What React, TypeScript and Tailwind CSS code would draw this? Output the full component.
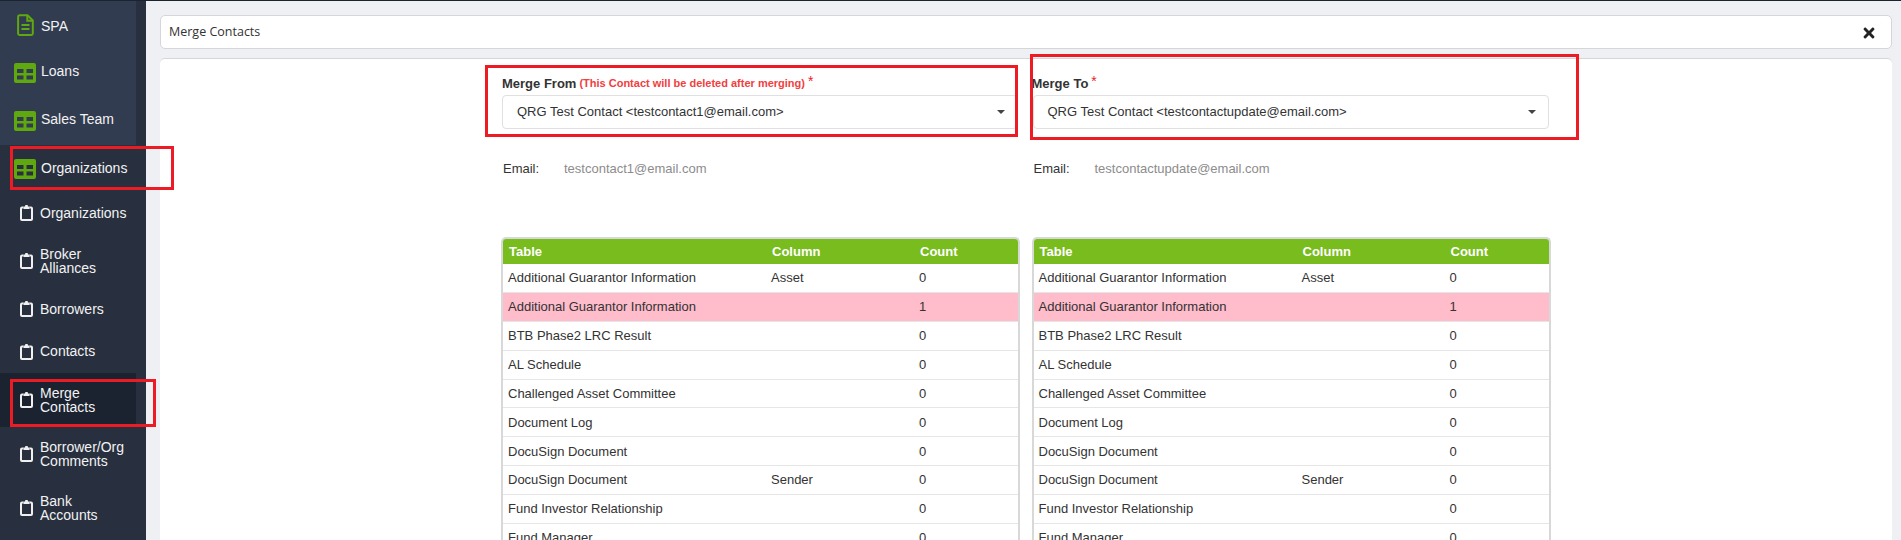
import { FaTimes } from 'react-icons/fa';

const FileIcon = () => (
  <svg width="17" height="22" viewBox="0 0 17 22" fill="none" className="text-[#5fa80f]">
    <path d="M2.500 1.200h8l5.300 5.300v13c0 .8-.7 1.400-1.500 1.400H2.500c-.8 0-1.400-.6-1.400-1.400V2.700c0-.8.6-1.500 1.400-1.500z" stroke="currentColor" strokeWidth="2" strokeLinejoin="round" />
    <path d="M10.300 1.500v5.300h5.200" stroke="currentColor" strokeWidth="2" />
    <path d="M4.500 11h8M4.500 15h8" stroke="currentColor" strokeWidth="2" />
  </svg>
);

const TableIcon = () => (
  <svg width="22" height="20" viewBox="0 0 22 20" className="mt-px">
    <path
      fill="#5fa80f"
      fillRule="evenodd"
      d="M2 0h18a2 2 0 0 1 2 2v16a2 2 0 0 1-2 2H2a2 2 0 0 1-2-2V2a2 2 0 0 1 2-2zM3 6v4h6.500V6zM12.500 6v4H19V6zM3 12.500v4h6.500v-4zM12.500 12.500v4H19v-4z"
    />
  </svg>
);

const ClipIcon = () => (
  <svg width="13" height="16" viewBox="0 0 13 16" fill="none" className="text-[#f0f0f0]">
    <path d="M3.500 2.500H2c-.6 0-1 .4-1 1V14c0 .6.4 1 1 1h9c.6 0 1-.4 1-1V3.500c0-.6-.4-1-1-1H9.500" stroke="currentColor" strokeWidth="2" />
    <rect x="3.500" y="1.500" width="6" height="2.500" fill="currentColor" />
    <rect x="5" y="0" width="3" height="2.500" rx="1" fill="currentColor" />
  </svg>
);

const groupItems = [
  { label: 'SPA', icon: 'file', h: 'h-[48px]', text: 'mt-px' },
  { label: 'Loans', icon: 'table', h: 'h-[46px]', text: '-mt-[2px]' },
  { label: 'Sales Team', icon: 'table', h: 'h-[50px]', text: '-mt-[2px]' },
];

const subItems = [
  { label: 'Organizations', h: 'h-[42px]' },
  { label: 'Broker Alliances', h: 'h-[54px]' },
  { label: 'Borrowers', h: 'h-[42px]' },
  { label: 'Contacts', h: 'h-[43px]' },
  { label: 'Merge Contacts', h: 'h-[54px]', active: true },
  { label: 'Borrower/Org Comments', h: 'h-[54px]' },
  { label: 'Bank Accounts', h: 'h-[54px]' },
];

const Sidebar = () => (
  <aside className="w-[146px] shrink-0 bg-[#28303f] font-['Liberation_Sans',sans-serif] text-[14px] leading-[14px] text-[#f2f2f2]">
    <div className="w-[136px] bg-[#323c50]">
      {groupItems.map((item) => (
        <div key={item.label} className={`flex items-center ${item.h}`}>
          <div className={`w-[41px] shrink-0 ${item.icon === 'file' ? 'pl-[17px]' : 'pl-[14px]'}`}>
            {item.icon === 'file' ? <FileIcon /> : <TableIcon />}
          </div>
          <span className={item.text}>{item.label}</span>
        </div>
      ))}
    </div>
    <div className="flex items-center h-[47px] w-[136px]">
      <div className="w-[41px] pl-[14px] shrink-0">
        <TableIcon />
      </div>
      <span className="-mt-[2px]">Organizations</span>
    </div>
    {subItems.map((item) => (
      <div key={item.label} className={`flex items-center w-[136px] ${item.h} ${item.active ? 'bg-[#1b2230]' : ''}`}>
        <div className="w-[40px] pl-[20px] shrink-0 flex">
          <ClipIcon />
        </div>
        <span className="w-[86px] -mt-px">{item.label}</span>
      </div>
    ))}
  </aside>
);

type Row = { table: string; column: string; count: number; pink?: boolean };

const rows: Row[] = [
  { table: 'Additional Guarantor Information', column: 'Asset', count: 0 },
  { table: 'Additional Guarantor Information', column: '', count: 1, pink: true },
  { table: 'BTB Phase2 LRC Result', column: '', count: 0 },
  { table: 'AL Schedule', column: '', count: 0 },
  { table: 'Challenged Asset Committee', column: '', count: 0 },
  { table: 'Document Log', column: '', count: 0 },
  { table: 'DocuSign Document', column: '', count: 0 },
  { table: 'DocuSign Document', column: 'Sender', count: 0 },
  { table: 'Fund Investor Relationship', column: '', count: 0 },
  { table: 'Fund Manager', column: '', count: 0 },
];

const CountTable = () => (
  <div className="border-2 border-b-0 border-[#d8d8d8] rounded-t-[5px] w-[519px] text-[13px] text-[#333]">
    <div className="grid grid-cols-[263px_148px_1fr] pl-[5px] h-[25px] items-center bg-[#78bc1e] rounded-t-[3px] font-bold text-white">
      <span className="pl-px">Table</span>
      <span className="pl-px">Column</span>
      <span className="pl-px">Count</span>
    </div>
    {rows.map((row, i) => (
      <div
        key={i}
        className={`grid grid-cols-[263px_148px_1fr] pl-[5px] h-[28.900px] items-center border-b border-[#e6e6e6] ${row.pink ? 'bg-[#ffbccb]' : 'bg-white'}`}
      >
        <span>{row.table}</span>
        <span>{row.column}</span>
        <span>{row.count}</span>
      </div>
    ))}
  </div>
);

const MergeColumn = ({ title, note, contact, email }: { title: string; note?: string; contact: string; email: string }) => (
  <div className="w-[519px]">
    <div className={`h-[20px] pb-[3px] flex items-center text-[13px] font-bold text-[#333] ${note ? 'pl-px' : ''}`}>
      <span>{title}</span>
      {note && <span className="ml-[3px] text-[11px] text-[#f04040]">{note}</span>}
      <span className="ml-[3px] -mt-[5px] text-[14px] font-normal text-[#e8232a]">*</span>
    </div>
    <div className="w-[516px] h-[34px] ml-px border border-[#e0e0e0] rounded-[4px] bg-white flex items-center justify-between pl-[14px] pr-[12px] text-[13px] text-[#333]">
      <span>{contact}</span>
      <span className="w-0 h-0 border-x-[4px] border-x-transparent border-t-[4px] border-t-[#444]" />
    </div>
    <div className="mt-[30px] h-[20px] flex items-center text-[13px] pl-[2px]">
      <span className="w-[61px] text-[#333]">Email:</span>
      <span className="text-[#8c8c8c]">{email}</span>
    </div>
    <div className="mt-[58px]">
      <CountTable />
    </div>
  </div>
);

const App = () => (
  <div className="relative h-[540px] w-[1901px] overflow-hidden flex border-t border-[#1b2230] bg-[#eff0f4] font-['Liberation_Sans',sans-serif]">
    <Sidebar />
    <main className="flex-1 min-w-0 pl-[14px] pr-[9px] pt-[14px]">
      <div className="h-[34px] w-[1732px] flex items-center justify-between bg-white border border-[#d5d5da] rounded-[5px] pl-[8px] pr-[14px] font-['Open_Sans',sans-serif] text-[12.500px] text-[#333]">
        <span>Merge Contacts</span>
        <FaTimes className="text-[#222] text-[16px] mt-px" />
      </div>
      <div className="mt-[9px] h-[600px] bg-white border-t border-[#d5d5da] rounded-t-[5px] pl-[341px] pt-[16px] flex gap-[11.500px]">
        <MergeColumn title="Merge From" note="(This Contact will be deleted after merging)" contact="QRG Test Contact <testcontact1@email.com>" email="testcontact1@email.com" />
        <MergeColumn title="Merge To" contact="QRG Test Contact <testcontactupdate@email.com>" email="testcontactupdate@email.com" />
      </div>
    </main>
    {/* red annotation boxes drawn over the screenshot */}
    <div className="absolute left-[10px] top-[145px] w-[164px] h-[44px] border-[3px] border-[#ed1c24]" />
    <div className="absolute left-[10px] top-[378px] w-[146px] h-[48px] border-[3px] border-[#ed1c24]" />
    <div className="absolute left-[485px] top-[64px] w-[533px] h-[72px] border-[3px] border-[#ed1c24]" />
    <div className="absolute left-[1030px] top-[53px] w-[549px] h-[86px] border-[3px] border-[#ed1c24]" />
  </div>
);

export default App;
